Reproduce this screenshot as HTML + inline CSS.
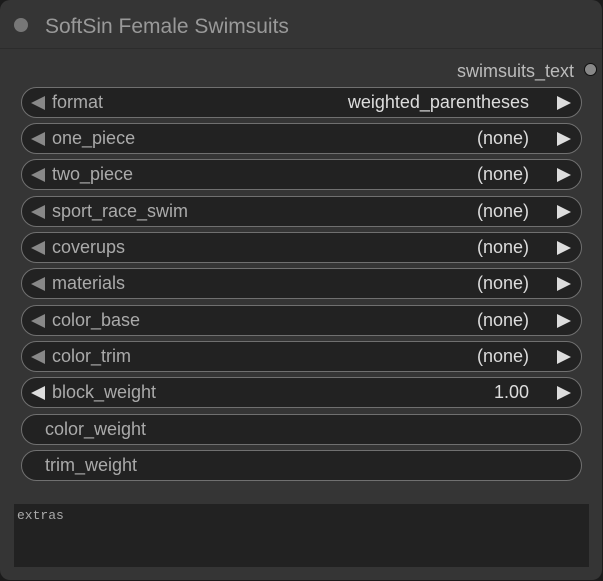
<html><head><style>
body{margin:0;width:603px;height:581px;background:#1b1b1b;font-family:"Liberation Sans",sans-serif;overflow:hidden}
.node{position:absolute;left:0;top:0;width:602px;height:580px;background:#353535;border-radius:10px}
.title{position:absolute;left:0;top:0;width:602px;height:48px;border-bottom:1px solid #2c2c2c}
.title .dot{position:absolute;left:14px;top:18px;width:14px;height:14px;border-radius:50%;background:#777}
.title span{position:absolute;left:45px;top:15px;font-size:21px;color:#999}
.out{position:absolute;left:457px;top:61px;font-size:18px;color:#bbb}
.odot{position:absolute;left:584px;top:63px;width:11px;height:11px;border-radius:50%;background:#888;border:1px solid #111}
.w{position:absolute;left:21px;width:559px;height:29px;background:#222;border:1px solid #707070;border-radius:16px;font-size:18px;line-height:29px;color:#aaa}
.w .l{position:absolute;left:30px}
.w .v{position:absolute;right:52px;color:#ddd}
.w .al{position:absolute;left:9px;top:8px;width:0;height:0;border-top:7px solid transparent;border-bottom:7px solid transparent;border-right:14px solid #888}
.w .ar{position:absolute;right:10px;top:8px;width:0;height:0;border-top:7px solid transparent;border-bottom:7px solid transparent;border-left:14px solid #ddd}
.w.b .al{border-right-color:#ddd}
.w.n .l{left:23px}
.ta{position:absolute;left:14px;top:504px;width:575px;height:63px;background:#222;font-family:"Liberation Mono",monospace;font-size:13px;color:#aaa;padding:4px 3px;box-sizing:border-box}
</style></head><body>
<div class="node">
<div class="title"><div class="dot"></div><span>SoftSin Female Swimsuits</span></div>
<div class="out">swimsuits_text</div><div class="odot"></div>
<div class="w" style="top:87px"><div class="al"></div><span class="l">format</span><span class="v">weighted_parentheses</span><div class="ar"></div></div>
<div class="w" style="top:123px"><div class="al"></div><span class="l">one_piece</span><span class="v">(none)</span><div class="ar"></div></div>
<div class="w" style="top:159px"><div class="al"></div><span class="l">two_piece</span><span class="v">(none)</span><div class="ar"></div></div>
<div class="w" style="top:196px"><div class="al"></div><span class="l">sport_race_swim</span><span class="v">(none)</span><div class="ar"></div></div>
<div class="w" style="top:232px"><div class="al"></div><span class="l">coverups</span><span class="v">(none)</span><div class="ar"></div></div>
<div class="w" style="top:268px"><div class="al"></div><span class="l">materials</span><span class="v">(none)</span><div class="ar"></div></div>
<div class="w" style="top:305px"><div class="al"></div><span class="l">color_base</span><span class="v">(none)</span><div class="ar"></div></div>
<div class="w" style="top:341px"><div class="al"></div><span class="l">color_trim</span><span class="v">(none)</span><div class="ar"></div></div>
<div class="w b" style="top:377px"><div class="al"></div><span class="l">block_weight</span><span class="v">1.00</span><div class="ar"></div></div>
<div class="w n" style="top:414px"><span class="l">color_weight</span></div>
<div class="w n" style="top:450px"><span class="l">trim_weight</span></div>
<div class="ta">extras</div>
</div>
</body></html>
